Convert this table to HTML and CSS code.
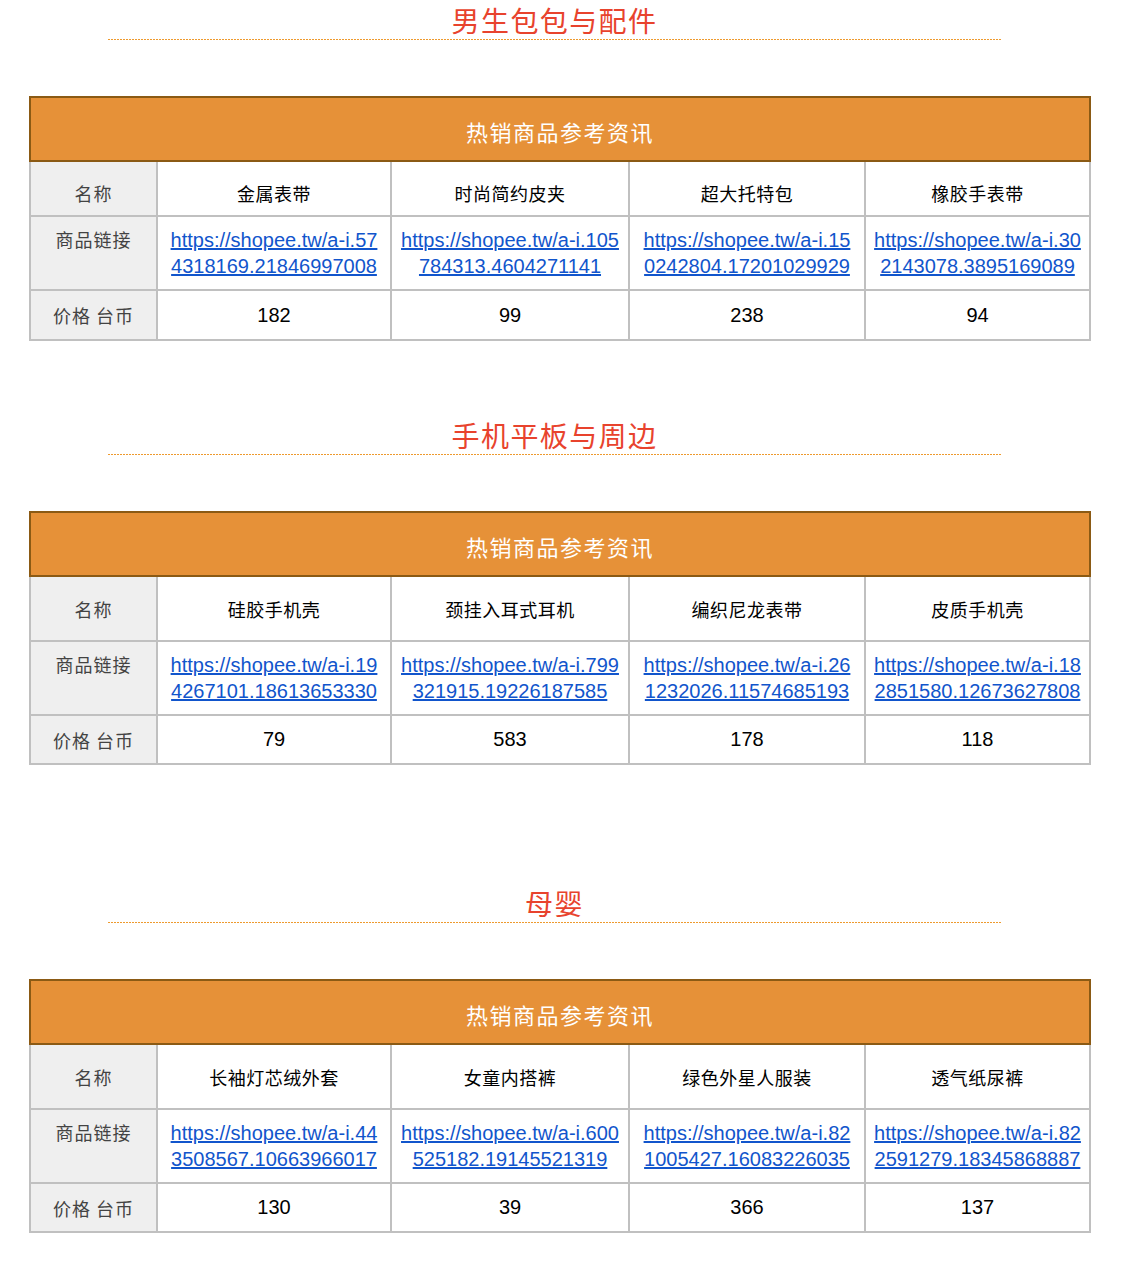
FILE: index.html
```html
<!DOCTYPE html>
<html lang="zh-CN">
<head>
<meta charset="utf-8">
<title>热销商品参考资讯</title>
<link rel="stylesheet" href="styles.css">
</head>
<body>
<section class="sec sec-first">
  <h2 class="sec-title">男生包包与配件</h2>
  <table class="tbl tbl-compact">
    <colgroup><col class="c0"><col class="c1"><col class="c2"><col class="c3"><col class="c4"></colgroup>
    <thead><tr><th colspan="5" class="head">热销商品参考资讯</th></tr></thead>
    <tbody>
      <tr class="r-name"><td class="lab">名称</td><td class="nm">金属表带</td><td class="nm">时尚简约皮夹</td><td class="nm">超大托特包</td><td class="nm">橡胶手表带</td></tr>
      <tr class="r-link"><td class="lab">商品链接</td>
        <td class="lk"><a href="#">https://shopee.tw/a-i.57<br>4318169.21846997008</a></td>
        <td class="lk"><a href="#">https://shopee.tw/a-i.105<br>784313.4604271141</a></td>
        <td class="lk"><a href="#">https://shopee.tw/a-i.15<br>0242804.17201029929</a></td>
        <td class="lk"><a href="#">https://shopee.tw/a-i.30<br>2143078.3895169089</a></td></tr>
      <tr class="r-price"><td class="lab">价格 台币</td><td class="pr">182</td><td class="pr">99</td><td class="pr">238</td><td class="pr">94</td></tr>
    </tbody>
  </table>
</section>
<section class="sec sec-second">
  <h2 class="sec-title">手机平板与周边</h2>
  <table class="tbl">
    <colgroup><col class="c0"><col class="c1"><col class="c2"><col class="c3"><col class="c4"></colgroup>
    <thead><tr><th colspan="5" class="head">热销商品参考资讯</th></tr></thead>
    <tbody>
      <tr class="r-name"><td class="lab">名称</td><td class="nm">硅胶手机壳</td><td class="nm">颈挂入耳式耳机</td><td class="nm">编织尼龙表带</td><td class="nm">皮质手机壳</td></tr>
      <tr class="r-link"><td class="lab">商品链接</td>
        <td class="lk"><a href="#">https://shopee.tw/a-i.19<br>4267101.18613653330</a></td>
        <td class="lk"><a href="#">https://shopee.tw/a-i.799<br>321915.19226187585</a></td>
        <td class="lk"><a href="#">https://shopee.tw/a-i.26<br>1232026.11574685193</a></td>
        <td class="lk"><a href="#">https://shopee.tw/a-i.18<br>2851580.12673627808</a></td></tr>
      <tr class="r-price"><td class="lab">价格 台币</td><td class="pr">79</td><td class="pr">583</td><td class="pr">178</td><td class="pr">118</td></tr>
    </tbody>
  </table>
</section>
<section class="sec sec-third">
  <h2 class="sec-title">母婴</h2>
  <table class="tbl">
    <colgroup><col class="c0"><col class="c1"><col class="c2"><col class="c3"><col class="c4"></colgroup>
    <thead><tr><th colspan="5" class="head">热销商品参考资讯</th></tr></thead>
    <tbody>
      <tr class="r-name"><td class="lab">名称</td><td class="nm">长袖灯芯绒外套</td><td class="nm">女童内搭裤</td><td class="nm">绿色外星人服装</td><td class="nm">透气纸尿裤</td></tr>
      <tr class="r-link"><td class="lab">商品链接</td>
        <td class="lk"><a href="#">https://shopee.tw/a-i.44<br>3508567.10663966017</a></td>
        <td class="lk"><a href="#">https://shopee.tw/a-i.600<br>525182.19145521319</a></td>
        <td class="lk"><a href="#">https://shopee.tw/a-i.82<br>1005427.16083226035</a></td>
        <td class="lk"><a href="#">https://shopee.tw/a-i.82<br>2591279.18345868887</a></td></tr>
      <tr class="r-price"><td class="lab">价格 台币</td><td class="pr">130</td><td class="pr">39</td><td class="pr">366</td><td class="pr">137</td></tr>
    </tbody>
  </table>
</section>
</body>
</html>
```
FILE: styles.css
```css
html, body {
  margin: 0;
  padding: 0;
  background: #ffffff;
}
body {
  font-family: "Noto Sans CJK SC", "Noto Sans", sans-serif;
  color: #000;
}
.sec-first { padding-top: 4px; }
.sec-second { margin-top: 78px; }
.sec-third { margin-top: 122px; }

.sec-title {
  position: relative;
  margin: 0 0 0 108px;
  width: 893px;
  padding-bottom: 4px;
  font-size: 28px;
  font-weight: 400;
  letter-spacing: 1.4px;
  line-height: 32px;
  text-align: center;
  color: #e8432d;
}
.sec-title::after {
  content: "";
  display: block;
  position: absolute;
  left: 0;
  right: 0;
  bottom: 0;
  height: 1px;
  background-image: repeating-linear-gradient(90deg, #ee9a2e 0 2px, rgba(255,255,255,0) 2px 3px);
}

.tbl {
  margin: 56px 0 0 29px;
  width: 1060px;
  border-collapse: collapse;
  table-layout: fixed;
}
.c0 { width: 127px; }
.c1 { width: 234px; }
.c2 { width: 238px; }
.c3 { width: 236px; }
.c4 { width: 225px; }

.head {
  height: 58px;
  padding: 4px 0 0 0;
  background: #e69138;
  border: 2px solid #8b5a14;
  color: #ffffff;
  font-size: 22px;
  font-weight: 400;
  letter-spacing: 1.5px;
  text-align: center;
  vertical-align: middle;
}

.tbl td {
  border: 2px solid #c0c0c0;
  padding: 0 8px;
  text-align: center;
}
.lab {
  background: #efefef;
  color: #434343;
  font-size: 18px;
  letter-spacing: 1px;
}
.nm {
  font-size: 18px;
  font-weight: 400;
  letter-spacing: 0.5px;
  color: #000;
}
.r-name td { height: 63px; vertical-align: middle; }
.tbl-compact .r-name td { height: 45px; padding-top: 8px; }

.r-link td {
  vertical-align: top;
  padding-top: 10px;
  padding-bottom: 10px;
  height: 52px;
}
.tbl-compact .r-link td { height: 51px; }
.r-link .lab { line-height: 24px; }
.lk {
  font-family: "Liberation Sans", Arial, sans-serif;
  font-size: 20px;
  line-height: 26px;
  white-space: nowrap;
}
.lk a {
  color: #1155cc;
  text-decoration: underline;
}
.r-price td { height: 47px; vertical-align: middle; }
.tbl-compact .r-price td { height: 48px; }
.pr {
  font-family: "Liberation Sans", Arial, sans-serif;
  font-size: 20px;
}
```
